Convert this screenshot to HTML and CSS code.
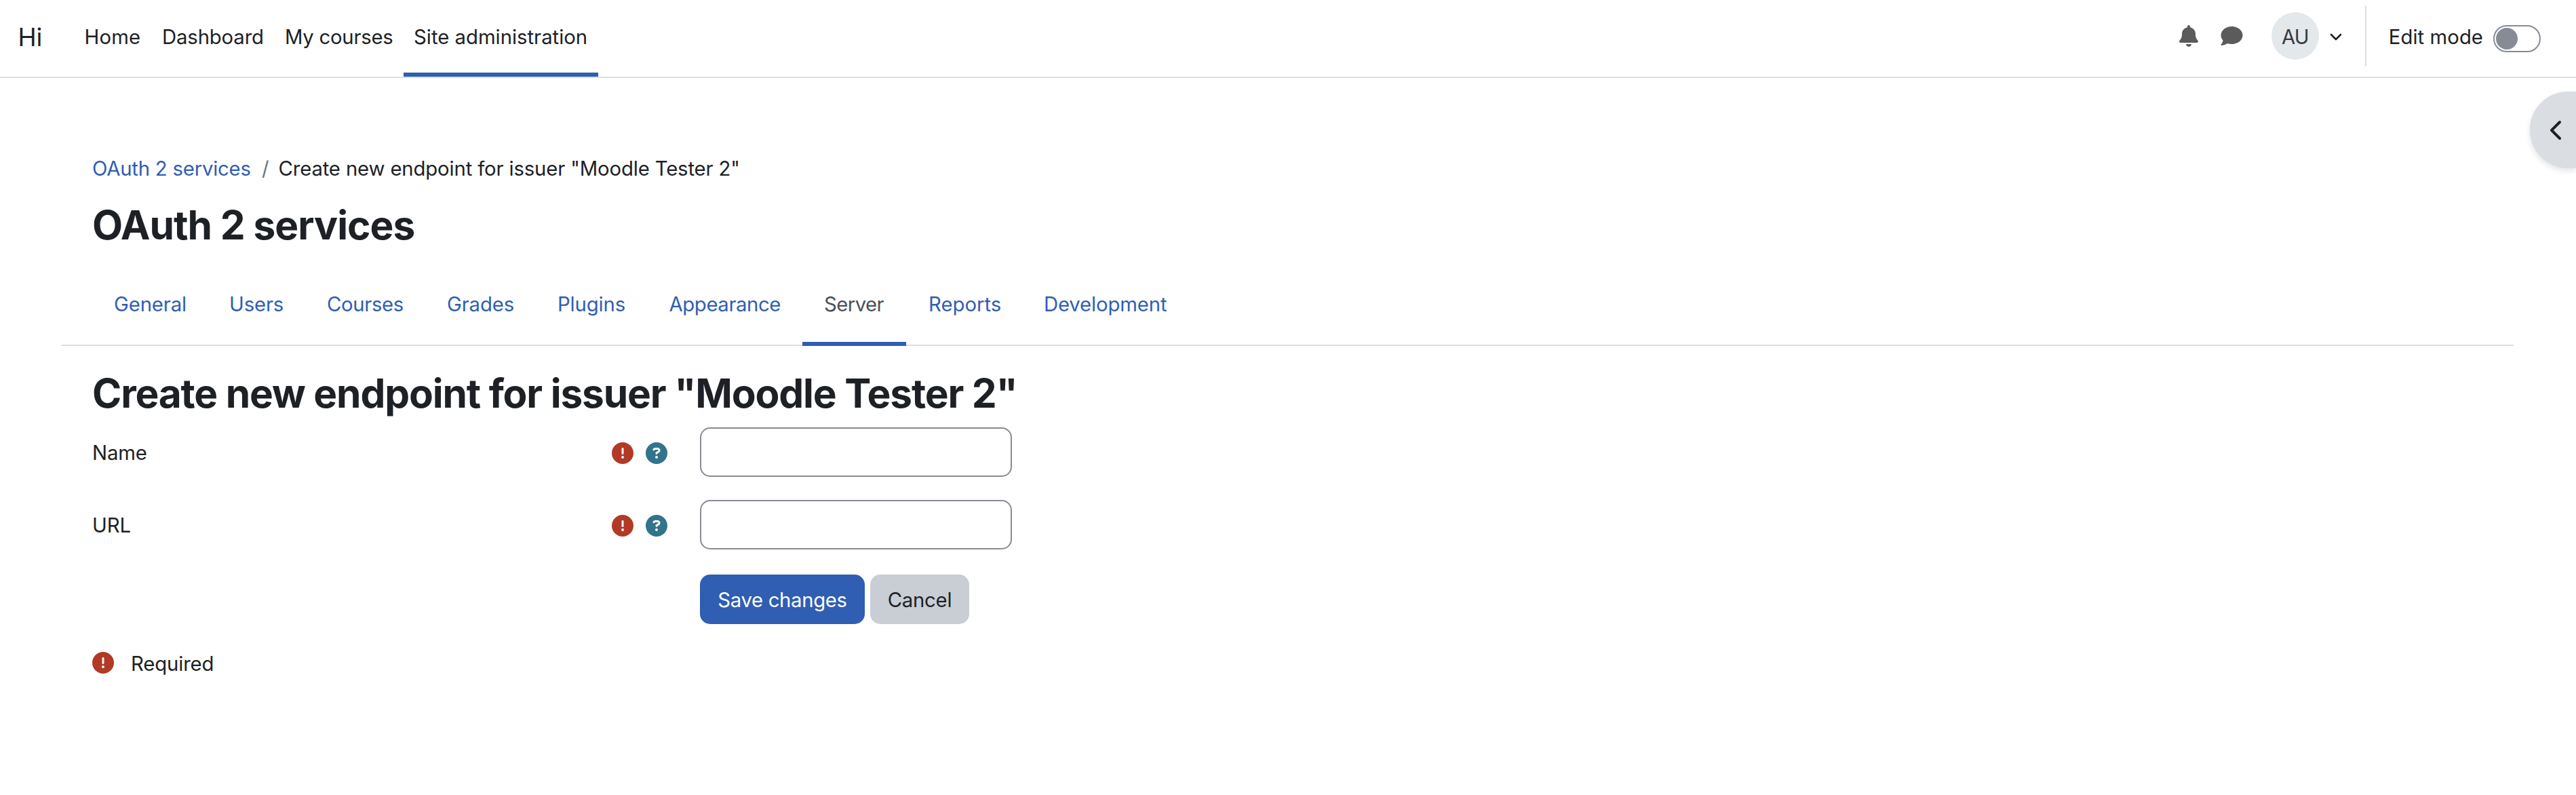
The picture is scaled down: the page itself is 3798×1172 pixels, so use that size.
FILE: index.html
```
<!DOCTYPE html>
<html lang="en">
<head>
<meta charset="utf-8">
<title>OAuth 2 services</title>
<link rel="stylesheet" href="styles.css">
</head>
<body>
<svg class="sprite" aria-hidden="true">
  <symbol id="required" viewBox="0 0 512 512"><path d="M256 512A256 256 0 1 0 256 0a256 256 0 1 0 0 512zm0-384c13.3 0 24 10.7 24 24V264c0 13.3-10.7 24-24 24s-24-10.7-24-24V152c0-13.3 10.7-24 24-24zM224 352a32 32 0 1 1 64 0 32 32 0 1 1 -64 0z"/></symbol>
  <symbol id="help" viewBox="0 0 512 512"><path d="M256 512A256 256 0 1 0 256 0a256 256 0 1 0 0 512zM169.8 165.3c7.9-22.3 29.1-37.3 52.8-37.3h58.3c34.9 0 63.1 28.3 63.1 63.1c0 22.6-12.1 43.5-31.7 54.8L280 264.4c-.2 13-10.9 23.6-24 23.6c-13.3 0-24-10.7-24-24V250.5c0-8.6 4.6-16.5 12.1-20.8l44.3-25.4c4.7-2.7 7.6-7.7 7.6-13.1c0-8.4-6.8-15.1-15.1-15.1H222.6c-3.4 0-6.4 2.1-7.5 5.3l-.4 1.2c-4.4 12.5-18.2 19-30.6 14.6s-19-18.2-14.6-30.6l.4-1.2zM224 352a32 32 0 1 1 64 0 32 32 0 1 1 -64 0z"/></symbol>
</svg>
<header class="navbar">
  <a class="brand">Hi</a>
  <nav class="primary-nav">
    <a class="nav-home">Home</a>
    <a class="nav-dashboard">Dashboard</a>
    <a class="nav-courses">My courses</a>
    <a class="nav-admin active">Site administration</a>
  </nav>
  <div class="user-nav">
    <svg class="icon-bell" viewBox="0 0 448 512"><path d="M224 0c-17.7 0-32 14.3-32 32V51.2C119 66 64 130.6 64 208v18.8c0 47-17.3 92.4-48.5 127.6l-7.4 8.3c-8.4 9.4-10.4 22.9-5.3 34.4S19.4 416 32 416H416c12.6 0 24-7.4 29.2-18.9s3.1-25-5.3-34.4l-7.4-8.3C401.3 319.2 384 273.9 384 226.8V208c0-77.4-55-142-128-156.8V32c0-17.7-14.3-32-32-32zm45.3 493.3c12-12 18.7-28.3 18.7-45.3H224 160c0 17 6.7 33.3 18.7 45.3s28.3 18.7 45.3 18.7s33.3-6.7 45.3-18.7z"/></svg>
    <svg class="icon-chat" viewBox="0 0 512 512"><path d="M512 240c0 114.9-114.6 208-256 208c-37.1 0-72.3-6.4-104.1-17.9c-11.9 8.7-31.3 20.6-54.3 30.6C73.6 471.1 44.7 480 16 480c-6.5 0-12.3-3.9-14.8-9.9c-2.5-6-1.1-12.8 3.4-17.4l.3-.3c.3-.3 .7-.7 1.3-1.4c1.1-1.2 2.8-3.1 4.9-5.7c4.1-5 9.6-12.4 15.2-21.6c10-16.6 19.5-38.4 21.4-62.9C17.7 326.8 0 285.1 0 240C0 125.1 114.6 32 256 32s256 93.1 256 208z"/></svg>
    <span class="avatar">AU</span>
    <svg class="icon-caret" viewBox="0 0 18 12"><path d="M2 2l7 7 7-7"/></svg>
    <div class="edit-mode">
      <span>Edit mode</span>
      <span class="toggle"></span>
    </div>
  </div>
</header>
<button class="drawer-toggle" aria-label="Open block drawer">
  <svg viewBox="0 0 256 512"><path d="M9.4 233.4c-12.5 12.5-12.5 32.8 0 45.3l192 192c12.5 12.5 32.8 12.5 45.3 0s12.5-32.8 0-45.3L77.3 256 246.6 86.6c12.5-12.5 12.5-32.8 0-45.3s-32.8-12.5-45.3 0l-192 192z"/></svg>
</button>
<main>
  <div class="breadcrumb"><a>OAuth 2 services</a><span class="divider">/</span><span>Create new endpoint for issuer "Moodle Tester 2"</span></div>
  <h1>OAuth 2 services</h1>
  <nav class="tabs">
    <a class="tab-general">General</a>
    <a class="tab-users">Users</a>
    <a class="tab-courses">Courses</a>
    <a class="tab-grades">Grades</a>
    <a class="tab-plugins">Plugins</a>
    <a class="tab-appearance">Appearance</a>
    <a class="tab-server active">Server</a>
    <a class="tab-reports">Reports</a>
    <a class="tab-development">Development</a>
  </nav>
  <h2>Create new endpoint for issuer "Moodle Tester 2"</h2>
  <form>
    <div class="field">
      <label for="name">Name</label>
      <div class="hints"><svg class="required"><use href="#required"/></svg><svg class="help"><use href="#help"/></svg></div>
      <input id="name" type="text">
    </div>
    <div class="field">
      <label for="url">URL</label>
      <div class="hints"><svg class="required"><use href="#required"/></svg><svg class="help"><use href="#help"/></svg></div>
      <input id="url" type="text">
    </div>
    <div class="actions">
      <button type="button" class="btn btn-save">Save changes</button>
      <button type="button" class="btn btn-cancel">Cancel</button>
    </div>
    <div class="legend"><svg class="required"><use href="#required"/></svg><span>Required</span></div>
  </form>
</main>
</body>
</html>
```
FILE: styles.css
```
* { box-sizing: border-box; }

body {
  margin: 0;
  height: 1172px;
  overflow: hidden;
  background: #fff;
  color: #1d2125;
  font: 400 29.3px/45px Inter, "Liberation Sans", sans-serif;
  letter-spacing: -0.14px;
}

svg { display: block; flex: none; }
.sprite { position: absolute; width: 0; height: 0; }

/* Top bar */
.navbar {
  display: flex;
  height: 115px;
  border-bottom: 2px solid #d9dfe3;
}
.brand {
  width: 109.5px;
  padding-left: 26.5px;
  font-size: 36.5px;
  line-height: 110px;
}
.primary-nav { display: flex; }
.primary-nav a {
  padding: 2px 0 0 15px;
  border-bottom: 6px solid transparent;
  line-height: 105px;
  white-space: nowrap;
}
.primary-nav .active { border-color: #2f5eb3; }
.nav-home { width: 114.5px; letter-spacing: 0.2px; }
.nav-dashboard { width: 181px; }
.nav-courses { width: 190px; letter-spacing: -0.25px; }
.nav-admin { width: 287px; letter-spacing: 0; }

.user-nav {
  display: flex;
  align-items: center;
  height: 106px;
  margin-left: auto;
  padding-right: 52px;
}
.icon-bell { width: 28px; height: 32px; margin-right: 33px; fill: #5b5b5b; }
.icon-chat { width: 33px; height: 32px; margin-right: 42px; fill: #5b5b5b; }
.avatar {
  width: 70px;
  height: 70px;
  border-radius: 50%;
  background: #e4e8eb;
  color: #343a40;
  line-height: 73px;
  text-align: center;
  letter-spacing: -1px;
}
.icon-caret {
  width: 18px;
  height: 12px;
  margin: 4px 34px 0 16px;
  fill: none;
  stroke: #1d2125;
  stroke-width: 2.6;
  stroke-linecap: round;
  stroke-linejoin: round;
}
.edit-mode {
  display: flex;
  align-items: center;
  height: 90px;
  padding: 3px 0 0 33px;
  border-left: 2px solid #d9dde1;
  letter-spacing: 0.05px;
}
.toggle {
  display: flex;
  align-items: center;
  width: 70px;
  height: 40px;
  margin: 5px 0 0 15px;
  padding-left: 2px;
  border: 2px solid #868b95;
  border-radius: 20px;
}
.toggle::before {
  content: "";
  width: 32px;
  height: 32px;
  border-radius: 50%;
  background: #868b95;
}

/* Drawer handle floating over the page's right edge */
.drawer-toggle {
  position: absolute;
  top: 135px;
  right: 0;
  width: 68px;
  height: 113px;
  padding: 0 0 0 30px;
  border: 0;
  border-radius: 56px 0 0 56px;
  background: #dadde2;
  box-shadow: 0 4px 8px rgba(0, 0, 0, 0.11);
}
.drawer-toggle svg { width: 16px; height: 32px; fill: #1d2125; }

/* Page content */
main { padding: 111px 92px 0 90px; }
.breadcrumb { display: flex; padding-left: 46px; white-space: nowrap; letter-spacing: -0.14px; }
a { color: inherit; }
.breadcrumb a, .tabs a { color: #2f5eb3; }
.breadcrumb a { width: 250px; letter-spacing: -0.21px; }
.divider { width: 24.5px; color: #6a737b; }
h1, h2 {
  margin: 25px 0 26px 46px;
  font-size: 58.6px;
  font-weight: 700;
  line-height: 72px;
  letter-spacing: -1.01px;
}
.tabs {
  display: flex;
  height: 116px;
  padding-left: 46px;
  box-shadow: inset 0 -2px #d9dfe3;
}
.tabs a {
  padding-left: 32px;
  border-bottom: 6px solid transparent;
  line-height: 110px;
}
.tabs .active { border-color: #2f5eb3; color: #495057; }
.tab-general { width: 170px; }
.tab-users { width: 144px; }
.tab-courses { width: 177px; letter-spacing: -0.34px; }
.tab-grades { width: 163px; }
.tab-plugins { width: 164.5px; }
.tab-appearance { width: 228.5px; letter-spacing: -0.4px; }
.tab-server { width: 153px; letter-spacing: -0.55px; }
.tabs .tab-reports { width: 171px; padding-left: 33px; letter-spacing: 0; }
.tab-development { width: 250px; }
h2 { margin: 34px 0 14px 46px; letter-spacing: -1.17px; }

/* Form */
form { padding-left: 46px; }
.field { display: flex; height: 73px; margin-bottom: 34px; }
.field label { width: 766px; line-height: 75px; }
.hints { display: flex; gap: 18px; width: 130px; padding-top: 22px; }
.required, .help { width: 32px; height: 32px; }
.required { fill: #b13a26; }
.help { fill: #31748b; }
.field input {
  width: 460px;
  height: 73px;
  border: 2px solid #868b95;
  border-radius: 15px;
  background: #fff;
}
.actions { display: flex; gap: 8px; margin-top: 37px; padding-left: 896px; }
.btn {
  height: 73px;
  padding: 2px 0 0;
  border: 0;
  border-radius: 15px;
  color: #1d2125;
  font: inherit;
  text-align: center;
}
.btn-save { width: 243px; background: #2f5eb3; color: #fff; letter-spacing: -0.34px; }
.btn-cancel { width: 146px; background: #c9cdd4; letter-spacing: -0.26px; }
.legend { display: flex; gap: 25px; margin-top: 36px; }
.legend svg { margin-top: 5px; }
```
